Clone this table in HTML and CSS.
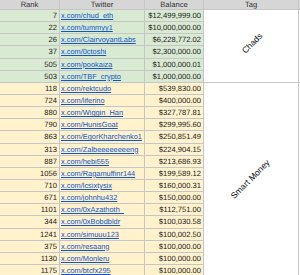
FILE: index.html
```html
<!DOCTYPE html>
<html lang="en">
<head>
    <meta charset="UTF-8">
    <meta name="viewport" content="width=device-width, initial-scale=1.0">
    <title>Wallets</title>
    <link rel="stylesheet" href="styles.css">
</head>
<body>
    <div class="sheet">
        <div class="hd">Rank</div>
        <div class="hd">Twitter</div>
        <div class="hd">Balance</div>
        <div class="hd">Tag</div>
        <div class="hd"></div>

        <!-- Chads -->
        <div class="num chad">7</div>
        <div class="handle chad"><a href="#">x.com/chud_eth</a></div>
        <div class="num chad">$12,499,999.00</div>
        <div class="tag chads-tag"><span>Chads</span></div>
        <div class="spare chads-tag"></div>

        <div class="num chad">22</div>
        <div class="handle chad"><a href="#">x.com/tummyy1</a></div>
        <div class="num chad">$10,000,000.00</div>

        <div class="num chad">26</div>
        <div class="handle chad"><a href="#">x.com/ClairvoyantLabs</a></div>
        <div class="num chad">$6,228,772.02</div>

        <div class="num chad">37</div>
        <div class="handle chad"><a href="#">x.com/0ctoshi</a></div>
        <div class="num chad">$2,300,000.00</div>

        <div class="num chad">505</div>
        <div class="handle chad"><a href="#">x.com/pookaiza</a></div>
        <div class="num chad">$1,000,000.01</div>

        <div class="num chad">503</div>
        <div class="handle chad"><a href="#">x.com/TBF_crypto</a></div>
        <div class="num chad">$1,000,000.00</div>

        <!-- Smart Money -->
        <div class="num smart">118</div>
        <div class="handle smart"><a href="#">x.com/rektcudo</a></div>
        <div class="num smart">$539,830.00</div>
        <div class="tag smart-tag"><span>Smart Money</span></div>
        <div class="spare smart-tag"></div>

        <div class="num smart">724</div>
        <div class="handle smart"><a href="#">x.com/liferino</a></div>
        <div class="num smart">$400,000.00</div>

        <div class="num smart">880</div>
        <div class="handle smart"><a href="#">x.com/Wiggin_Han</a></div>
        <div class="num smart">$327,787.81</div>

        <div class="num smart">790</div>
        <div class="handle smart"><a href="#">x.com/HunisGoat</a></div>
        <div class="num smart">$299,995.60</div>

        <div class="num smart">863</div>
        <div class="handle smart"><a href="#">x.com/EgorKharchenko1</a></div>
        <div class="num smart">$250,851.49</div>

        <div class="num smart">313</div>
        <div class="handle smart"><a href="#">x.com/Zalbeeeeeeeeng</a></div>
        <div class="num smart">$224,904.15</div>

        <div class="num smart">887</div>
        <div class="handle smart"><a href="#">x.com/hebi555</a></div>
        <div class="num smart">$213,686.93</div>

        <div class="num smart">1056</div>
        <div class="handle smart"><a href="#">x.com/Ragamuffinr144</a></div>
        <div class="num smart">$199,589.12</div>

        <div class="num smart">710</div>
        <div class="handle smart"><a href="#">x.com/lcsixtysix</a></div>
        <div class="num smart">$160,000.31</div>

        <div class="num smart">671</div>
        <div class="handle smart"><a href="#">x.com/johnhu432</a></div>
        <div class="num smart">$150,000.00</div>

        <div class="num smart">1101</div>
        <div class="handle smart"><a href="#">x.com/0xAzathoth_</a></div>
        <div class="num smart">$112,751.00</div>

        <div class="num smart">344</div>
        <div class="handle smart"><a href="#">x.com/0xBobdbldr</a></div>
        <div class="num smart">$100,030.58</div>

        <div class="num smart">1241</div>
        <div class="handle smart"><a href="#">x.com/simuuu123</a></div>
        <div class="num smart">$100,002.50</div>

        <div class="num smart">375</div>
        <div class="handle smart"><a href="#">x.com/resaang</a></div>
        <div class="num smart">$100,000.00</div>

        <div class="num smart">1130</div>
        <div class="handle smart"><a href="#">x.com/Monleru</a></div>
        <div class="num smart">$100,000.00</div>

        <div class="num smart">1175</div>
        <div class="handle smart"><a href="#">x.com/btcfx295</a></div>
        <div class="num smart">$100,000.00</div>
    </div>
</body>
</html>
```

FILE: styles.css
```css
body {
    margin: 0;
    background-color: #fff;
    font-family: "Liberation Sans", Arial, sans-serif;
    font-size: 7.6px;
    color: #222;
    text-rendering: geometricPrecision;
    overflow: hidden;
}

.sheet {
    display: grid;
    grid-template-columns: 59px 84px 58px 94px 1fr;
    grid-template-rows: 9px;
    grid-auto-rows: 11.15px;
    gap: 1px;
    background-color: #c6c6c6;
    width: 300px;
}

.sheet > div {
    overflow: hidden;
    white-space: nowrap;
    line-height: 11px;
}

.hd {
    background-color: #d6d6d6;
    text-align: center;
    line-height: 9px !important;
    color: #333;
}

.chad {
    background-color: #d9ead3;
}

.smart {
    background-color: #fff2cc;
}

.num {
    text-align: right;
    padding-right: 2px;
}

.handle {
    padding-left: 1px;
    font-size: 7.4px;
}

.handle a {
    color: #1155cc;
    text-decoration: underline;
}

.tag {
    background-color: #fff;
    display: flex;
    justify-content: center;
    align-items: center;
    font-size: 8.6px;
    color: #111;
}

.tag span {
    display: inline-block;
    transform: rotate(-45deg);
}

.chads-tag span {
    margin: 0 0 5px 3px;
}

.spare {
    background-color: #fff;
}

.chads-tag {
    grid-row: span 6;
}

.smart-tag {
    grid-row: span 16;
}
```
